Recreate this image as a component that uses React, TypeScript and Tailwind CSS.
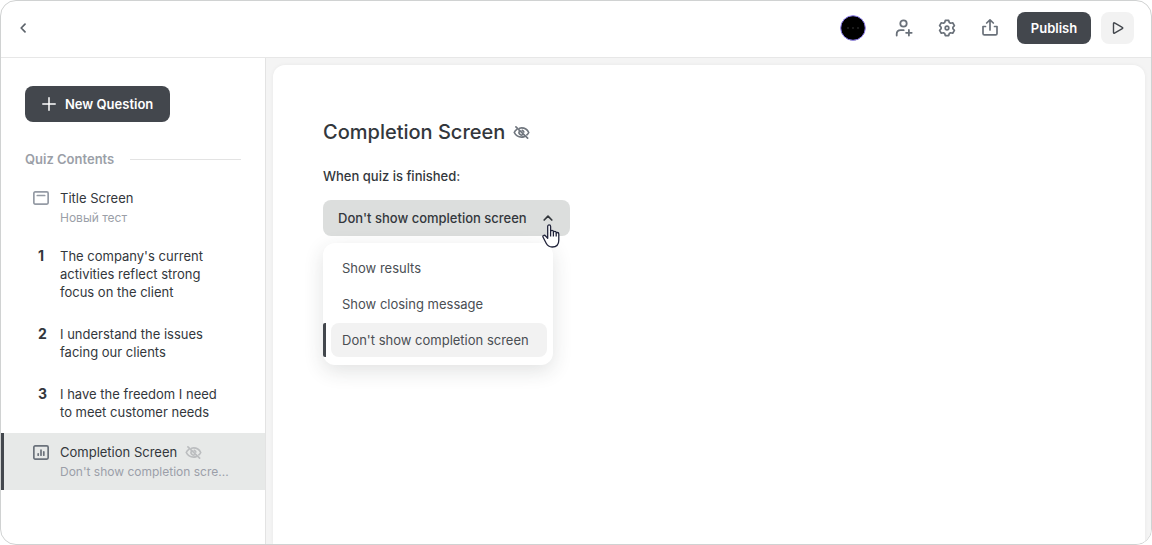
import { useState } from 'react';
import type { ReactNode } from 'react';

interface Question {
  id: number;
  text: string;
}

const questions: Question[] = [
  { id: 1, text: "The company's current activities reflect strong focus on the client" },
  { id: 2, text: 'I understand the issues facing our clients' },
  { id: 3, text: 'I have the freedom I need to meet customer needs' },
];

const finishOptions = ['Show results', 'Show closing message', "Don't show completion screen"];

function shorten(text: string, max: number) {
  return text.length > max ? `${text.slice(0, max)}...` : text;
}

function ChevronIcon({ className }: { className?: string }) {
  return (
    <svg viewBox="0 0 10 10" className={className} fill="none" stroke="currentColor" strokeWidth="1.7" strokeLinecap="round" strokeLinejoin="round" aria-hidden="true">
      <path d="M1.2 7 5 3.2 8.8 7" />
    </svg>
  );
}

function EyeOffIcon({ className }: { className?: string }) {
  return (
    <svg viewBox="0 0 18 14" className={className} fill="none" stroke="currentColor" strokeWidth="1.8" strokeLinecap="round" strokeLinejoin="round" aria-hidden="true">
      <path d="M3 1 15.6 13" />
      <path d="M7 2.4C7.7 2.200 8.300 2.100 9 2.100c4.200 0 6.800 2.900 7.800 4.900-.5 1-1.100 1.800-2 2.600" />
      <path d="M4 3.700C2.600 4.700 1.700 5.900 1.200 7c1 2 3.600 4.900 7.800 4.900 1.100 0 2.100-.2 3-.5" />
      <path d="M6.700 5.500A2.700 2.700 0 0 0 10.300 9.300" />
      <path d="M9.800 4.700c.8.300 1.500 1 1.700 1.800" />
    </svg>
  );
}

function TitleCardIcon() {
  return (
    <svg viewBox="0 0 16 14" className="h-3.5 w-4" fill="none" stroke="currentColor" strokeWidth="1.7" strokeLinecap="round" aria-hidden="true">
      <rect x=".85" y=".85" width="14.3" height="12.3" rx="1.3" />
      <path d="M4.3 4.5h7.4" />
    </svg>
  );
}

function ResultsCardIcon() {
  return (
    <svg viewBox="0 0 16 15" className="h-[15px] w-4" fill="none" stroke="currentColor" strokeWidth="1.7" strokeLinecap="round" aria-hidden="true">
      <rect x=".85" y=".85" width="14.3" height="13.3" rx="1.3" />
      <path d="M5.2 8.8v1.4M8 5.2v5M10.8 6.800v3.400" />
    </svg>
  );
}

function PlayerAvatar() {
  return (
    <svg viewBox="0 0 26 26" className="size-[26px]" aria-hidden="true">
      <circle cx="13" cy="13" r="12.3" fill="#000" stroke="#8b7cf0" strokeWidth="1" />
      <g fill="#3f3f3f">
        <circle cx="8" cy="13" r=".8" />
        <circle cx="13" cy="13" r=".8" />
        <circle cx="18" cy="13" r=".8" />
      </g>
    </svg>
  );
}

function IconButton({ label, children }: { label: string; children: ReactNode }) {
  return (
    <button type="button" aria-label={label} className="flex size-[18px] items-center justify-center text-[#697079]">
      {children}
    </button>
  );
}

function Header() {
  return (
    <header className="flex h-[57px] shrink-0 items-center justify-between border-b border-[#e7e7e7] pr-[17px] pb-[2px] pl-4">
      <button type="button" aria-label="Back" className="flex size-3 items-center justify-center text-[#5c636b]">
        <ChevronIcon className="size-[10px] -rotate-90" />
      </button>

      <div className="flex items-center gap-[10px]">
        <div className="mr-2 flex items-center gap-[25px]">
          <button type="button" aria-label="Account" className="mr-1 rounded-full">
            <PlayerAvatar />
          </button>
          <IconButton label="Invite people">
            <svg viewBox="0 0 18 18" className="size-[18px]" fill="none" stroke="currentColor" strokeWidth="1.8" strokeLinecap="round" strokeLinejoin="round" aria-hidden="true">
              <circle cx="8.5" cy="4.5" r="3.2" />
              <path d="M1.7 16.5v-1.5c0-2.200 1.700-3.800 4-3.800h3" />
              <path d="M13.9 11v5.600M11.100 13.800h5.600" />
            </svg>
          </IconButton>
          <IconButton label="Settings">
            <svg viewBox="0 0 18 18" className="size-[18px]" fill="none" stroke="currentColor" strokeWidth="1.7" strokeLinejoin="round" aria-hidden="true">
              <path d="M7.3 1.4h3.400l.6 2.100 1.300.75 2.100-.5 1.700 2.900-1.500 1.600v1.500l1.500 1.600-1.700 2.900-2.100-.5-1.300.75-.6 2.100H7.300l-.6-2.100-1.300-.75-2.100.5-1.700-2.900 1.500-1.600v-1.500L1.600 6.650l1.700-2.900 2.100.5 1.300-.75z" />
              <circle cx="9" cy="9" r="1.8" />
            </svg>
          </IconButton>
          <IconButton label="Share">
            <svg viewBox="0 0 18 18" className="size-[18px]" fill="none" stroke="currentColor" strokeWidth="1.7" strokeLinecap="round" strokeLinejoin="round" aria-hidden="true">
              <path d="M9 11V1.200M5.700 4 9 .9 12.300 4" />
              <path d="M4.500 7.500H2v7c0 .9.500 1.400 1.400 1.400h11.200c.9 0 1.400-.5 1.400-1.400v-7h-2.500" />
            </svg>
          </IconButton>
        </div>
        <button type="button" className="h-8 w-[74px] rounded-lg bg-[#43474d] text-center text-[13px] leading-[18px] font-semibold text-white">
          Publish
        </button>
        <button type="button" aria-label="Preview" className="flex h-8 w-[33px] items-center justify-center rounded-lg bg-[#f2f2f2] text-[#43474d]">
          <svg viewBox="0 0 12 12" className="size-3" fill="none" stroke="currentColor" strokeWidth="1.4" strokeLinejoin="round" aria-hidden="true">
            <path d="M1.500 1.500c0-.6.500-.9 1-.6l7.800 4.400c.6.300.6 1 0 1.300l-7.800 4.500c-.5.300-1 0-1-.6z" />
          </svg>
        </button>
      </div>
    </header>
  );
}

function Sidebar() {
  return (
    <aside className="flex w-[265px] shrink-0 flex-col border-r border-[#e3e3e3] pt-7">
      <div className="px-6">
        <button type="button" className="flex h-9 w-[145px] items-center rounded-lg bg-[#43474d] pl-[17px] text-[13px] leading-[18px] font-semibold text-white">
          <svg viewBox="0 0 14 14" className="mr-[9px] size-3.5" stroke="currentColor" strokeWidth="1.5" strokeLinecap="round" aria-hidden="true">
            <path d="M7 .8v12.4M.8 7h12.4" />
          </svg>
          New Question
        </button>

        <h2 className="mt-7 flex items-center gap-4 text-[13px] leading-[18px] font-semibold text-[#9b9fa8]">
          Quiz Contents
          <span className="h-px flex-1 bg-[#e3e3e3]" />
        </h2>
      </div>

      <nav className="mt-[11px] text-[13px] leading-[18px] text-[#33373c]">
        <a href="#title" className="flex h-14 pt-[10px] pr-6 pl-8">
          <span className="mt-[2px] mr-[11px] text-[#959ba5]">
            <TitleCardIcon />
          </span>
          <span className="min-w-0">
            <span className="block">Title Screen</span>
            <span className="mt-[2px] block text-xs leading-[18px] text-[#9b9fa8]">Новый тест</span>
          </span>
        </a>

        {questions.map((question) => (
          <a key={question.id} href={`#question-${question.id}`} className="flex py-3 pr-10 pl-8">
            <span className="w-[27px] shrink-0 pl-[5px] text-sm leading-[18px] font-bold">{question.id}</span>
            <span>{question.text}</span>
          </a>
        ))}

        <a href="#completion" aria-current="page" className="flex h-[57px] border-l-3 border-[#43474d] bg-[#e7e9e8] pt-[10px] pr-6 pl-[29px]">
          <span className="mt-[2px] mr-[11px] text-[#6b727b]">
            <ResultsCardIcon />
          </span>
          <span className="min-w-0">
            <span className="flex items-center gap-2">
              Completion Screen
              <EyeOffIcon className="h-[13px] w-[17px] text-[#bbbdbf]" />
            </span>
            <span className="mt-[2px] block text-xs leading-[18px] text-[#9b9fa8]">{shorten(finishOptions[2], 26 )}</span>
          </span>
        </a>
      </nav>
    </aside>
  );
}

function HandCursor() {
  return (
    <svg viewBox="0 0 18 24" className="pointer-events-none absolute top-6 right-[10px] z-20 h-6 w-[18px]" fill="#fff" stroke="#20233a" strokeWidth="1.3" strokeLinejoin="round" aria-hidden="true">
      <path d="M5.7 14.2V2.500c0-1 .6-1.600 1.400-1.600s1.500.6 1.500 1.600v5.100c0-.8.600-1.300 1.400-1.300s1.400.5 1.400 1.300v.8c.1-.7.700-1.100 1.400-1.100s1.400.5 1.400 1.300v.9c.1-.6.600-1 1.300-1 .8 0 1.300.6 1.300 1.400v6.100c0 4.200-2.500 7-6.600 7-3 0-4.700-1.200-6-3.700l-3.100-6c-.4-.8-.2-1.500.4-1.800.7-.4 1.500-.2 2.100.5z" />
      <path d="M8.600 7.600v4.800M11.400 8.400v4M14.200 9.400v3.200" fill="none" />
    </svg>
  );
}

function FinishSelect() {
  const [isOpen, setIsOpen] = useState(true);
  const [selected, setSelected] = useState(2);

  return (
    <div className="relative mt-[15px] w-[247px]">
      <button
        type="button"
        aria-haspopup="listbox"
        aria-expanded={isOpen}
        aria-labelledby="finish-label finish-value"
        onClick={() => setIsOpen(!isOpen)}
        className="flex h-9 w-full items-center justify-between rounded-lg bg-[#dcdedd] pr-[17px] pl-[15px] text-[13px] leading-[18px] font-medium text-[#33373c]"
      >
        <span id="finish-value">{finishOptions[selected]}</span>
        <ChevronIcon className={isOpen ? 'size-[10px]' : 'size-[10px] rotate-180'} />
      </button>
      <HandCursor />

      {isOpen && (
        <ul
          role="listbox"
          aria-labelledby="finish-label"
          className="absolute top-full left-0 mt-[7px] flex w-[230px] flex-col gap-[2px] rounded-xl bg-white py-2 shadow-[0_6px_20px_rgba(40,50,50,0.14)]"
        >
          {finishOptions.map((option, index) => (
            <li
              key={option}
              role="option"
              aria-selected={index === selected}
              className={`border-l-3 pr-[6px] pl-[5px] ${index === selected ? 'rounded-l-xs border-[#43474d]' : 'border-transparent'}`}
            >
              <button
                type="button"
                onClick={() => setSelected(index)}
                className={`block h-[34px] w-full rounded-lg px-[11px] text-left text-[13px] leading-[18px] text-[#4a4e53] ${index === selected ? 'bg-[#f2f2f2]' : ''}`}
              >
                {option}
              </button>
            </li>
          ))}
        </ul>
      )}
    </div>
  );
}

export default function App() {
  return (
    <div className="flex min-h-screen flex-col overflow-hidden rounded-2xl border border-[#d0d2d2] bg-white font-['Inter',sans-serif]">
      <Header />
      <div className="flex flex-1">
        <Sidebar />
        <div className="flex min-w-0 flex-1 bg-[#f4f4f4] pt-[7px] pr-[6px] pl-[7px]">
          <main className="flex-1 rounded-t-xl bg-white px-[50px] pt-[52px] text-[#33373c] shadow-[0_0_4px_rgba(0,0,0,0.05)]">
            <h1 className="flex items-center gap-2 text-xl leading-[30px] font-medium">
              Completion Screen
              <EyeOffIcon className="h-[13px] w-[17px] text-[#70767e]" />
            </h1>
            <p id="finish-label" className="mt-5 text-[13px] leading-[18px] font-medium">
              When quiz is finished:
            </p>
            <FinishSelect />
          </main>
        </div>
      </div>
    </div>
  );
}
